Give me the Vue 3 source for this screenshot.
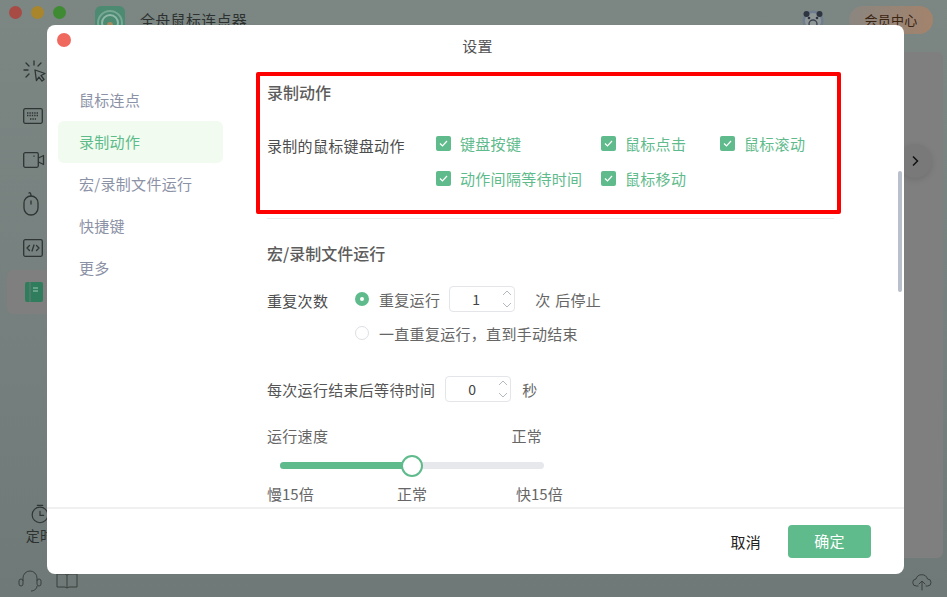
<script setup>
const navItems = ['鼠标连点', '录制动作', '宏/录制文件运行', '快捷键', '更多']
const checks = ['键盘按键', '鼠标点击', '鼠标滚动', '动作间隔等待时间', '鼠标移动']
</script>

<template>
  <div class="app">
    <header class="topbar">
      <span class="light red"></span>
      <span class="light yellow"></span>
      <span class="light green"></span>
      <span class="logo">
        <svg width="30" height="30" viewBox="0 0 30 30">
          <rect width="30" height="30" rx="6" fill="#4d8a72" />
          <circle cx="15" cy="17" r="12" fill="none" stroke="#77a795" stroke-width="2" />
          <circle cx="15" cy="17" r="8" fill="none" stroke="#8fb8a8" stroke-width="2" />
          <circle cx="15" cy="19" r="3" fill="#a8885f" />
        </svg>
      </span>
      <span class="app-title">全舟鼠标连点器</span>
      <span class="spacer"></span>
      <svg class="avatar" width="22" height="24" viewBox="0 0 22 24">
        <circle cx="11" cy="12" r="10.5" fill="#6f7d90" />
        <circle cx="11" cy="12" r="8" fill="#8f9696" />
        <circle cx="4.5" cy="5" r="3" fill="#2f3540" />
        <circle cx="17.5" cy="5" r="3" fill="#2f3540" />
        <circle cx="7" cy="9" r="1.3" fill="#2f3540" />
        <circle cx="15" cy="9" r="1.3" fill="#2f3540" />
        <circle cx="11" cy="15" r="4" fill="none" stroke="#3c4250" stroke-width="1.4" />
      </svg>
      <span class="vip">会员中心</span>
    </header>

    <div class="middle">
      <aside class="side">
        <div class="side-item">
          <svg width="26" height="24" viewBox="0 0 26 24" fill="none" stroke="#2f3534" stroke-width="1.3" stroke-linecap="round" stroke-linejoin="round">
            <path d="M12 10l10 3.5-4 2 3 4-2 1.6-3-4-2.6 3.4z" />
            <path d="M11 1v4M3 3l3 3M1 10h4M3 17l3-3M18 3l-3 3" />
          </svg>
        </div>
        <div class="side-item">
          <svg width="20" height="16" viewBox="0 0 20 16" fill="none" stroke="#2f3534" stroke-width="1.3">
            <rect x="0.7" y="0.7" width="18.6" height="14.6" rx="1.5" />
            <path d="M4 5h12M4 7.5h12M7 11h6" stroke-dasharray="1.4 1" />
          </svg>
        </div>
        <div class="side-item">
          <svg width="22" height="16" viewBox="0 0 22 16" fill="none" stroke="#2f3534" stroke-width="1.3" stroke-linejoin="round">
            <rect x="0.7" y="0.7" width="14.6" height="14.6" rx="1.5" />
            <path d="M15.5 6l5-2.5v9l-5-2.5" />
            <path d="M11 3.4v1.4" />
          </svg>
        </div>
        <div class="side-item">
          <svg width="16" height="24" viewBox="0 0 16 24" fill="none" stroke="#2f3534" stroke-width="1.3" stroke-linecap="round">
            <rect x="1" y="4" width="14" height="19" rx="7" />
            <path d="M8 9v3M6 1c1-.6 2 0 2 3" />
          </svg>
        </div>
        <div class="side-item">
          <svg width="20" height="18" viewBox="0 0 20 18" fill="none" stroke="#2f3534" stroke-width="1.3" stroke-linecap="round" stroke-linejoin="round">
            <rect x="0.7" y="0.7" width="18.6" height="16.6" rx="1.5" />
            <path d="M6.5 6.5L4 9l2.5 2.5M13.5 6.5L16 9l-2.5 2.5M11 6l-2 6" />
          </svg>
        </div>
        <div class="side-item active">
          <svg width="18" height="20" viewBox="0 0 18 20">
            <rect width="18" height="20" rx="2" fill="#2f7d5c" />
            <path d="M5 0v20" stroke="#6f7d78" stroke-width="1" />
            <path d="M8 6h5M8 9h5" stroke="#9fc9b5" stroke-width="1" />
          </svg>
        </div>
        <div class="timer">
          <svg width="20" height="20" viewBox="0 0 22 22" fill="none" stroke="#2f3534" stroke-width="1.3" stroke-linecap="round">
            <circle cx="11" cy="12" r="8.6" />
            <path d="M11 8v4.5h4M8 1.5h6" />
          </svg>
          <span>定时</span>
        </div>
      </aside>
      <main class="panel">
        <span class="next">
          <svg width="10" height="12" viewBox="0 0 10 12" fill="none" stroke="#111" stroke-width="1.5">
            <path d="M3 1.5L7.5 6 3 10.5" />
          </svg>
        </span>
      </main>
    </div>

    <footer class="bottom">
      <svg width="24" height="22" viewBox="0 0 24 22" fill="none" stroke="#3a403f" stroke-width="1">
        <path d="M5 11V8a7 7 0 0 1 14 0v3" />
        <rect x="1" y="9" width="4" height="7" rx="2" />
        <rect x="19" y="9" width="4" height="7" rx="2" />
        <path d="M19 16c0 3-3 5-6 5" />
      </svg>
      <svg width="22" height="16" viewBox="0 0 22 16" fill="none" stroke="#3a403f" stroke-width="1">
        <path d="M1 1h8l2 1 2-1h8v13h-8l-2 1-2-1H1zM11 2v13" />
      </svg>
      <span class="spacer"></span>
      <svg class="cloud" width="20" height="18" viewBox="0 0 20 18" fill="none" stroke="#3a403f" stroke-width="1" stroke-linecap="round" stroke-linejoin="round">
        <path d="M6 13H4.5a3.5 3.5 0 0 1-.5-7 6 6 0 0 1 11.5 0 3.5 3.5 0 0 1 0 7H14" />
        <path d="M10 17V8.5M7 11l3-3 3 3" />
      </svg>
    </footer>

    <section class="modal">
      <span class="close"></span>
      <div class="modal-title">设置</div>
      <div class="modal-body">
        <nav class="nav">
          <div v-for="(item, i) in navItems" :key="item" class="nav-item" :class="{ on: i === 1 }">{{ item }}</div>
        </nav>
        <div class="content">
          <h3 class="heading">录制动作</h3>
          <div class="record-row">
            <span class="record-label">录制的鼠标键盘动作</span>
            <div class="check-grid">
              <label v-for="c in checks" :key="c" class="check">
                <span class="box">
                  <svg width="11" height="9" viewBox="0 0 11 9" fill="none" stroke="#fff" stroke-width="1.2">
                    <path d="M2 4.5l2.5 2.5L9 2" />
                  </svg>
                </span>
                {{ c }}
              </label>
            </div>
          </div>
          <div class="divider"></div>

          <h3 class="heading second">宏/录制文件运行</h3>
          <div class="repeat">
            <span class="repeat-label">重复次数</span>
            <div class="repeat-options">
              <div class="option">
                <span class="radio checked"></span>
                <span>重复运行</span>
                <span class="stepper">
                  <span class="num">1</span>
                  <svg class="arrows" width="10" height="22" viewBox="0 0 10 22" fill="none" stroke="#b4b8c0" stroke-width="1">
                    <path d="M1 7l4-4 4 4M1 15l4 4 4-4" />
                  </svg>
                </span>
                <span class="after">次 后停止</span>
              </div>
              <div class="option low">
                <span class="radio"></span>
                <span>一直重复运行，直到手动结束</span>
              </div>
            </div>
          </div>
          <div class="wait">
            <span>每次运行结束后等待时间</span>
            <span class="stepper">
              <span class="num">0</span>
              <svg class="arrows" width="10" height="22" viewBox="0 0 10 22" fill="none" stroke="#b4b8c0" stroke-width="1">
                <path d="M1 7l4-4 4 4M1 15l4 4 4-4" />
              </svg>
            </span>
            <span class="sec">秒</span>
          </div>
          <div class="speed-head">
            <span>运行速度</span>
            <span>正常</span>
          </div>
          <div class="track">
            <div class="fill"></div>
            <span class="thumb"></span>
          </div>
          <div class="ticks">
            <span>慢15倍</span>
            <span>正常</span>
            <span>快15倍</span>
          </div>
        </div>
      </div>
      <div class="modal-foot">
        <span class="cancel">取消</span>
        <span class="ok">确定</span>
      </div>
      <span class="scrollbar"></span>
      <span class="annotation"></span>
    </section>
  </div>
</template>

<style>
html, body { margin: 0; padding: 0; }
</style>

<style scoped>
.app {
  position: relative;
  width: 947px;
  height: 597px;
  overflow: hidden;
  display: flex;
  flex-direction: column;
  background: linear-gradient(180deg, #7c8683 0%, #757f7d 60%, #6f7977 100%);
  font-family: "Noto Sans CJK SC", "Noto Sans", sans-serif;
  font-size: 15px;
  letter-spacing: 0.3px;
  color: #4d4d4d;
}
.topbar {
  height: 50px;
  flex: none;
  box-sizing: border-box;
  display: flex;
  align-items: flex-start;
  padding: 6px 14px 0 9px;
}
.light {
  width: 13px;
  height: 13px;
  border-radius: 50%;
  margin: 0 9px 0 0;
}
.red { background: #a84b45; }
.yellow { background: #a9862c; }
.green { background: #3f8b34; margin-right: 0; }
.logo { margin-left: 29px; height: 30px; }
.app-title { margin: 3px 0 0 15px; color: #2d3231; line-height: 22px; }
.spacer { flex: 1; }
.avatar { margin-top: 3px; margin-right: 25px; }
.vip {
  width: 84px;
  height: 28px;
  line-height: 28px;
  text-align: center;
  border-radius: 14px;
  background: linear-gradient(90deg, #8a8680 0%, #a3836c 100%);
  color: #3a2412;
  font-size: 13px;
}
.middle { flex: 1; display: flex; min-height: 0; }
.side {
  width: 60px;
  flex: none;
  display: flex;
  flex-direction: column;
  box-sizing: border-box;
  padding: 0 0 12px 7px;
}
.side-item {
  width: 53px;
  height: 44px;
  display: flex;
  align-items: center;
  justify-content: flex-start;
  padding-left: 16px;
  box-sizing: border-box;
}
.side-item.active { background: #7f7f7f; border-radius: 6px; padding-left: 18px; }
.timer {
  margin-top: auto;
  display: flex;
  flex-direction: column;
  align-items: center;
  width: 40px;
  padding-left: 13px;
  color: #2d3231;
  line-height: 22px;
  font-size: 14px;
}
.panel {
  flex: 1;
  position: relative;
  margin-right: 4px;
  margin-top: 2px;
  background: #807f7f;
  border-radius: 6px;
}
.next {
  position: absolute;
  right: 11px;
  top: 92px;
  width: 34px;
  height: 34px;
  border-radius: 50%;
  background: #7a7979;
  box-shadow: 0 2px 6px rgba(0, 0, 0, 0.12);
  display: flex;
  align-items: center;
  justify-content: center;
}
.bottom {
  height: 39px;
  flex: none;
  box-sizing: border-box;
  display: flex;
  align-items: center;
  gap: 14px;
  padding: 6px 15px 0 18px;
}
.cloud { margin-top: 2px; }

.modal {
  position: absolute;
  left: 47px;
  top: 25px;
  width: 857px;
  height: 549px;
  background: #fff;
  border-radius: 8px;
  display: flex;
  flex-direction: column;
  overflow: hidden;
}
.close {
  position: absolute;
  left: 10px;
  top: 8px;
  width: 14px;
  height: 14px;
  border-radius: 50%;
  background: #f0695f;
}
.modal-title {
  height: 44px;
  flex: none;
  box-sizing: border-box;
  padding-left: 4px;
  line-height: 42px;
  text-align: center;
  font-size: 15px;
  color: #555;
}
.modal-body { flex: 1; min-height: 0; display: flex; overflow: hidden; }
.nav {
  width: 220px;
  flex: none;
  box-sizing: border-box;
  padding: 10px 0 0 11px;
}
.nav-item {
  width: 165px;
  height: 42px;
  line-height: 41px;
  box-sizing: border-box;
  padding-left: 21px;
  border-radius: 6px;
  color: #8c92a6;
}
.nav-item.on { background: #f1fbef; color: #5dbb8a; }
.content { flex: 1; min-width: 0; padding-right: 70px; }
.heading {
  margin: 12px 0 0;
  line-height: 22px;
  font-size: 16px;
  font-weight: 500;
  color: #5c5c5c;
  letter-spacing: 0;
}
.heading.second { margin-top: 23px; }
.record-row { display: flex; margin-top: 28px; }
.record-label { width: 169px; flex: none; line-height: 24px; margin-top: 3px; color: #4d4d4d; }
.check-grid {
  display: grid;
  grid-template-columns: 165px 119px 100px;
  grid-auto-rows: 35px;
}
.check {
  display: flex;
  align-items: center;
  gap: 9px;
  height: 24px;
  white-space: nowrap;
  color: #5fbb8c;
}
.box {
  width: 15px;
  height: 15px;
  border-radius: 2px;
  background: #5fbb8c;
  display: flex;
  align-items: center;
  justify-content: center;
  flex: none;
}
.divider { height: 1px; background: #ececec; margin-top: 17px; }
.repeat { display: flex; margin-top: 22px; }
.repeat-label { width: 88px; flex: none; line-height: 26px; margin-top: 2px; }
.repeat-options { display: flex; flex-direction: column; }
.option { display: flex; align-items: center; height: 26px; color: #666; }
.option.low { margin-top: 8px; }
.radio {
  width: 14px;
  height: 14px;
  box-sizing: border-box;
  border: 1px solid #dcdfe4;
  border-radius: 50%;
  margin-right: 10px;
  flex: none;
}
.radio.checked { border: 5px solid #5fbb8c; background: #fff; }
.stepper {
  position: relative;
  width: 66px;
  height: 26px;
  box-sizing: border-box;
  border: 1px solid #e3e5e9;
  border-radius: 4px;
  display: inline-flex;
  align-items: center;
  margin-left: 9px;
  color: #444;
  font-size: 14px;
}
.wait .stepper { margin-left: 10px; }
.num { width: 52px; text-align: center; }
.arrows { flex: none; }
.after { margin-left: 20px; word-spacing: 1px; }
.wait { display: flex; align-items: center; height: 26px; margin-top: 30px; color: #555; }
.sec { margin-left: 11px; color: #666; }
.speed-head {
  display: flex;
  justify-content: space-between;
  width: 275px;
  margin-top: 23px;
  line-height: 22px;
  color: #666;
}
.track {
  position: relative;
  width: 264px;
  height: 7px;
  margin: 15px 0 0 13px;
  border-radius: 4px;
  background: #e7e8ec;
}
.fill { width: 132px; height: 7px; border-radius: 4px; background: #5fbb8c; }
.thumb {
  position: absolute;
  left: 121px;
  top: -7px;
  width: 22px;
  height: 22px;
  box-sizing: border-box;
  border: 2px solid #5fbb8c;
  border-radius: 50%;
  background: #fff;
}
.ticks { display: flex; margin-top: 14px; line-height: 22px; color: #666; letter-spacing: 0; }
.ticks span:nth-child(1) { width: 130px; }
.ticks span:nth-child(2) { width: 119px; }
.modal-foot {
  height: 67px;
  flex: none;
  box-sizing: border-box;
  border-top: 2px solid #f0f0f0;
  display: flex;
  align-items: center;
  justify-content: flex-end;
  padding: 0 33px 0 0;
}
.cancel { color: #222; margin-right: 27px; }
.ok {
  width: 83px;
  height: 33px;
  line-height: 32px;
  text-align: center;
  border-radius: 4px;
  background: #5fbb8c;
  color: #fff;
  font-size: 15px;
}
.scrollbar {
  position: absolute;
  left: 851px;
  top: 146px;
  width: 4px;
  height: 121px;
  border-radius: 2px;
  background: #b9bfcb;
}
.annotation {
  position: absolute;
  left: 209px;
  top: 47px;
  width: 585px;
  height: 142px;
  box-sizing: border-box;
  border: 4px solid #ff0000;
  border-radius: 2px;
}
</style>
